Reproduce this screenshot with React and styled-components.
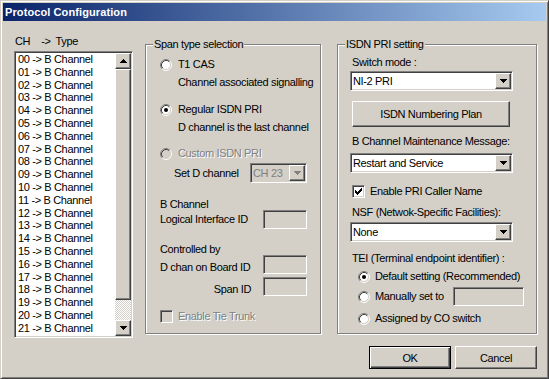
import React from 'react';
import styled, { createGlobalStyle, css } from 'styled-components';

const FACE = '#d4d0c8';

const GlobalStyle = createGlobalStyle`
  html, body { margin: 0; padding: 0; background: ${FACE}; }
  body {
    font-family: "Liberation Sans", Arial, sans-serif;
    font-size: 11px;
    letter-spacing: -0.35px;
    color: #000;
  }
  * { box-sizing: border-box; }
`;

const raised = css`
  border: 1px solid;
  border-color: #fff #404040 #404040 #fff;
  box-shadow: inset -1px -1px 0 #808080, inset 1px 1px 0 ${FACE};
`;

const sunken = css`
  border: 1px solid;
  border-color: #808080 #fff #fff #808080;
  box-shadow: inset 1px 1px 0 #404040, inset -1px -1px 0 ${FACE};
`;

const etched = css`
  border: 1px solid #808080;
  box-shadow: inset 1px 1px 0 #fff, 1px 1px 0 #fff;
`;

const Window = styled.div`
  width: 549px;
  height: 379px;
  display: flex;
  flex-direction: column;
  background: ${FACE};
  border: 1px solid;
  border-color: ${FACE} #404040 #404040 ${FACE};
  box-shadow: inset 1px 1px 0 #fff, inset -1px -1px 0 #808080;
  padding: 2px;
`;

const TitleBar = styled.div`
  height: 18px;
  display: flex;
  align-items: center;
  padding-left: 2px;
  background: linear-gradient(to right, #0a246a, #a6caf0);
  color: #fff;
  font-weight: bold;
  font-size: 11px;
  letter-spacing: 0.1px;
`;

const Body = styled.div`
  flex: 1;
  display: flex;
  align-items: flex-start;
  padding: 14px 0 0 11px;
`;

const LeftColumn = styled.div`
  width: 119px;
  display: flex;
  flex-direction: column;
`;

const ListCaption = styled.div`
  display: flex;
  height: 13px;
  line-height: 13px;
  margin-bottom: 3px;
  padding-left: 1px;
`;

const CaptionPart = styled.span`
  margin-left: ${p => p.$ml || 0}px;
  white-space: nowrap;
`;

const ListBox = styled.div`
  ${sunken};
  height: 287px;
  padding: 1px;
  display: flex;
  background: #fff;
  overflow: hidden;
`;

const Items = styled.div`
  flex: 1;
  overflow: hidden;
  padding-left: 2px;
`;

const Item = styled.div`
  height: 12.8px;
  line-height: 13px;
  white-space: nowrap;
`;

const ScrollBar = styled.div`
  width: 16px;
  display: flex;
  flex-direction: column;
`;

const ScrollButton = styled.div`
  ${raised};
  height: 16px;
  flex: none;
  background: ${FACE};
  display: flex;
  align-items: center;
  justify-content: center;
`;

const Thumb = styled.div`
  ${raised};
  height: 231px;
  flex: none;
  background: ${FACE};
`;

const Track = styled.div`
  flex: 1;
  background: repeating-conic-gradient(${FACE} 0 25%, #fff 0 50%) 0 0 / 2px 2px;
`;

const Group = styled.div`
  ${etched};
  position: relative;
  width: ${p => p.$w}px;
  height: 290px;
  margin-top: ${p => p.$mt || 0}px;
  margin-left: ${p => p.$ml || 0}px;
  padding: ${p => p.$pad};
  display: flex;
  flex-direction: column;
`;

const Legend = styled.span`
  position: absolute;
  top: -7px;
  left: 7px;
  padding: 0 1px;
  line-height: 13px;
  background: ${FACE};
`;

const Row = styled.div`
  display: flex;
  align-items: ${p => p.$align || 'center'};
  flex: none;
  height: ${p => p.$h || 13}px;
  margin-top: ${p => p.$mt || 0}px;
  padding-left: ${p => p.$pl || 0}px;
  gap: ${p => p.$gap ?? 6}px;
`;

const Text = styled.span`
  line-height: 13px;
  white-space: nowrap;
  width: ${p => (p.$w ? `${p.$w}px` : 'auto')};
  text-align: ${p => p.$right ? 'right' : 'left'};
  padding-top: ${p => p.$pt || 0}px;
  color: ${p => p.$disabled ? '#808080' : '#000'};
  text-shadow: ${p => p.$disabled ? '1px 1px 0 #fff' : 'none'};
`;

const Line = styled.div`
  flex: none;
  height: ${p => p.$h || 13}px;
  line-height: ${p => p.$h || 13}px;
  margin-top: ${p => p.$mt || 0}px;
  margin-left: ${p => p.$ml || 0}px;
  white-space: nowrap;
`;

const ComboBox = styled.div`
  ${sunken};
  flex: none;
  width: ${p => p.$w}px;
  height: ${p => p.$h || 20}px;
  margin-top: ${p => p.$mt || 0}px;
  padding: 1px;
  display: flex;
  background: ${p => p.$disabled ? FACE : '#fff'};
  color: ${p => p.$disabled ? '#808080' : '#000'};
`;

const ComboText = styled.span`
  flex: 1;
  padding-left: 1px;
  display: flex;
  align-items: center;
  white-space: nowrap;
`;

const DropButton = styled.div`
  ${raised};
  width: 16px;
  background: ${FACE};
  display: flex;
  align-items: center;
  justify-content: center;
`;

const EditBox = styled.div`
  ${sunken};
  flex: none;
  width: ${p => p.$w}px;
  height: 19px;
  background: ${FACE};
`;

const PushButton = styled.div`
  flex: none;
  width: ${p => p.$w}px;
  height: ${p => p.$h}px;
  margin-top: ${p => p.$mt || 0}px;
  margin-left: ${p => p.$ml || 0}px;
  display: flex;
  align-items: center;
  justify-content: center;
  background: ${FACE};
  ${p => p.$default
    ? css`
        border: 1px solid #000;
        box-shadow: inset 1px 1px 0 #fff, inset -1px -1px 0 #404040, inset -2px -2px 0 #808080;
      `
    : raised};
`;

const RightColumn = styled.div`
  display: flex;
  flex-direction: column;
  margin-left: 16px;
  margin-top: 9px;
  width: 200px;
`;

const ButtonRow = styled.div`
  display: flex;
  justify-content: flex-end;
  gap: 4px;
  margin-top: 12px;
`;

const CheckFrame = styled.div`
  ${sunken};
  flex: none;
  width: 13px;
  height: 13px;
  padding: 1px;
  display: flex;
  align-items: center;
  justify-content: center;
  background: ${p => p.$disabled ? FACE : '#fff'};
`;

const Arrow = ({ up, color = '#000' }) => (
  <svg width="7" height="4" viewBox="0 0 7 4" shapeRendering="crispEdges">
    {up ? (
      <path d="M3 0h1v1h1v1h1v1h1v1H0V3h1V2h1V1h1z" fill={color} />
    ) : (
      <path d="M0 0h7v1H6v1H5v1H4v1H3V3H2V2H1V1H0z" fill={color} />
    )}
  </svg>
);

const Radio = ({ checked, disabled }) => (
  <svg width="12" height="12" viewBox="0 0 12 12" style={{ flex: 'none' }}>
    <circle cx="6" cy="6" r="4.5" fill={disabled ? FACE : '#fff'} />
    <path d="M9.89 2.11A5.5 5.5 0 0 0 2.11 9.89" stroke="#808080" fill="none" />
    <path d="M2.11 9.89A5.5 5.5 0 0 0 9.89 2.11" stroke="#fff" fill="none" />
    <path d="M9.18 2.82A4.5 4.5 0 0 0 2.82 9.18" stroke="#404040" fill="none" />
    <path d="M2.82 9.18A4.5 4.5 0 0 0 9.18 2.82" stroke={FACE} fill="none" />
    {checked && <circle cx="6" cy="6" r="2" fill="#000" />}
  </svg>
);

const CheckBox = ({ checked, disabled }) => (
  <CheckFrame $disabled={disabled}>
    {checked && (
      <svg width="7" height="7" viewBox="0 0 7 7" shapeRendering="crispEdges">
        <path d="M6 0h1v3H6v1H5v1H4v1H3v1H2V6H1V5H0V2h1v1h1v1h1V3h1V2h1V1h1z" fill="#000" />
      </svg>
    )}
  </CheckFrame>
);

const Combo = ({ value, w, mt, disabled }) => (
  <ComboBox $w={w} $mt={mt} $disabled={disabled}>
    <ComboText>{value}</ComboText>
    <DropButton>
      <Arrow color={disabled ? '#808080' : '#000'} />
    </DropButton>
  </ComboBox>
);

const channels = Array.from({ length: 23 }, (_, i) => String(i).padStart(2, '0'));

export default function App() {
  return (
    <>
      <GlobalStyle />
      <Window>
        <TitleBar>Protocol Configuration</TitleBar>
        <Body>
          <LeftColumn>
            <ListCaption>
              <CaptionPart>CH</CaptionPart>
              <CaptionPart $ml={11}>-&gt;</CaptionPart>
              <CaptionPart $ml={5}>Type</CaptionPart>
            </ListCaption>
            <ListBox>
              <Items>
                {channels.map(ch => (
                  <Item key={ch}>{`${ch} -> B Channel`}</Item>
                ))}
              </Items>
              <ScrollBar>
                <ScrollButton><Arrow up /></ScrollButton>
                <Thumb />
                <Track />
                <ScrollButton><Arrow /></ScrollButton>
              </ScrollBar>
            </ListBox>
          </LeftColumn>

          <Group $w={176} $mt={9} $ml={12} $pad="13px 0 0 14px">
            <Legend>Span type selection</Legend>
            <Row>
              <Radio />
              <Text>T1 CAS</Text>
            </Row>
            <Row $mt={5} $pl={18}>
              <Text>Channel associated signalling</Text>
            </Row>
            <Row $mt={14}>
              <Radio checked />
              <Text>Regular ISDN PRI</Text>
            </Row>
            <Row $mt={5} $pl={18}>
              <Text>D channel is the last channel</Text>
            </Row>
            <Row $mt={13}>
              <Radio disabled />
              <Text $disabled>Custom ISDN PRI</Text>
            </Row>
            <Row $h={20} $mt={3} $pl={14} $gap={0}>
              <Text $w={76}>Set D channel</Text>
              <Combo value="CH 23" w={57} disabled />
            </Row>
            <Line $h={12} $mt={15}>B Channel</Line>
            <Row $h={19} $gap={0}>
              <Text $w={103}>Logical Interface ID</Text>
              <EditBox $w={44} />
            </Row>
            <Line $h={11} $mt={15}>Controlled by</Line>
            <Row $h={19} $gap={0} $align="flex-end">
              <Text $w={103}>D chan on Board ID</Text>
              <EditBox $w={44} />
            </Row>
            <Row $h={19} $mt={3} $gap={0} $align="flex-end">
              <Text $w={91} $right>Span ID</Text>
              <Text $w={12} />
              <EditBox $w={44} />
            </Row>
            <Row $mt={14} $gap={5}>
              <CheckBox disabled />
              <Text $disabled>Enable Tie Trunk</Text>
            </Row>
          </Group>

          <RightColumn>
            <Group $w={200} $pad="11px 0 0 12px">
              <Legend>ISDN PRI setting</Legend>
              <Line $ml={2}>Switch mode :</Line>
              <Combo value="NI-2 PRI" w={163} mt={2} />
              <PushButton $w={158} $h={26} $mt={10} $ml={2}>ISDN Numbering Plan</PushButton>
              <Line $ml={2} $mt={8}>B Channel Maintenance Message:</Line>
              <Combo value="Restart and Service" w={163} mt={5} />
              <Row $mt={12} $pl={2} $gap={5}>
                <CheckBox checked />
                <Text>Enable PRI Caller Name</Text>
              </Row>
              <Line $ml={2} $mt={8}>NSF (Netwok-Specific Facilities):</Line>
              <Combo value="None" w={163} mt={3} />
              <Line $ml={2} $mt={10}>TEI (Terminal endpoint identifier) :</Line>
              <Row $mt={5} $pl={8} $gap={5}>
                <Radio checked />
                <Text>Default setting (Recommended)</Text>
              </Row>
              <Row $h={19} $mt={4} $pl={8} $gap={5}>
                <Radio />
                <Text $w={73}>Manually set to</Text>
                <EditBox $w={71} />
              </Row>
              <Row $mt={6} $pl={8} $gap={5}>
                <Radio />
                <Text>Assigned by CO switch</Text>
              </Row>
            </Group>
            <ButtonRow>
              <PushButton $w={82} $h={23} $default>OK</PushButton>
              <PushButton $w={82} $h={23}>Cancel</PushButton>
            </ButtonRow>
          </RightColumn>
        </Body>
      </Window>
    </>
  );
}
